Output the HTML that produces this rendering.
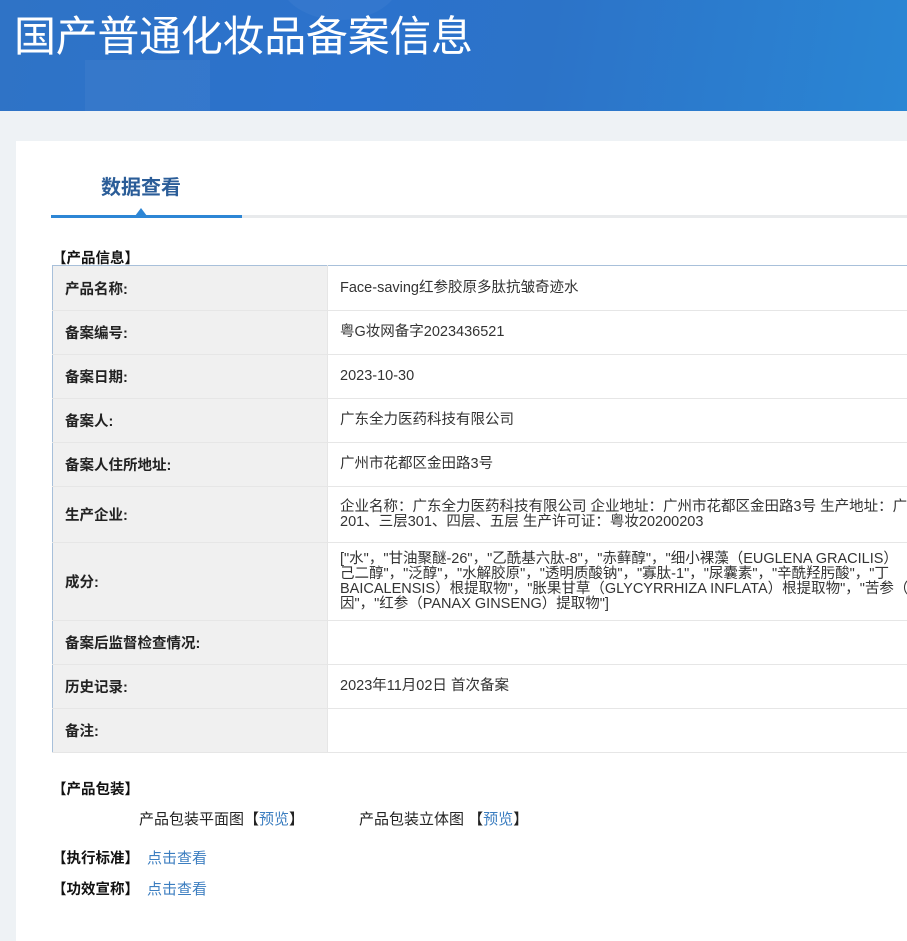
<!DOCTYPE html>
<html><head><meta charset="utf-8"><style>
*{margin:0;padding:0;box-sizing:border-box}
body{width:907px;height:907px;overflow:hidden;background:#eef2f5;font-family:"Liberation Sans","Noto Sans CJK SC",sans-serif;color:#333;position:relative}
.hdr{position:absolute;left:0;top:0;width:907px;height:111px;background:linear-gradient(100deg,#2f73c6 0%,#2b72cc 40%,#2c73c8 60%,#2a86d4 100%);overflow:hidden}
.hdr .s1{position:absolute;left:85px;top:60px;width:125px;height:60px;background:rgba(255,255,255,0.04)}
.hdr .s2{position:absolute;left:280px;top:-60px;width:120px;height:80px;border-radius:50%;background:rgba(255,255,255,0.04)}
.hdr h1{position:absolute;left:14px;top:3px;font-size:42px;font-weight:normal;color:#fff;letter-spacing:-0.3px;font-family:"Liberation Sans","Noto Sans CJK SC",sans-serif}
.panel{position:absolute;left:16px;top:141px;width:900px;height:800px;background:#fff}
.tab{position:absolute;left:101px;top:171px;font-size:20px;font-weight:bold;color:#2b5d98}
.line{position:absolute;left:51px;top:215px;width:860px;height:3px;background:#e8eaec}
.line b{position:absolute;left:0;top:0;width:191px;height:3px;background:#2d86d5}
.tri{position:absolute;left:135px;top:208px;width:0;height:0;border-left:6px solid transparent;border-right:6px solid transparent;border-bottom:8px solid #2d86d5}
.sec{position:absolute;font-size:14.5px;font-weight:bold;color:#111}
table{position:absolute;left:52px;top:265px;width:870px;border-collapse:collapse;border:1px solid #a8c0da;font-size:14.5px}
td{border-bottom:1px solid #e6e6e6;vertical-align:middle}
td.l{width:275px;background:#f0f0f0;font-weight:bold;padding-left:12px;color:#222;border-right:1px solid #e6e6e6}
td.v{padding-left:12px;line-height:15px;white-space:nowrap;overflow:hidden;color:#333}
a{color:#3c7ec0;text-decoration:none}
.t{position:absolute;font-size:15px;color:#222}
</style></head><body>
<div class="hdr"><div class="s1"></div><div class="s2"></div><h1>国产普通化妆品备案信息</h1></div>
<div class="panel"></div>
<div class="tab">数据查看</div>
<div class="line"><b></b></div>
<div class="tri"></div>
<div class="sec" style="left:52px;top:247px">【产品信息】</div>
<table>
<tr style="height:45px"><td class="l">产品名称:</td><td class="v">Face-saving红参胶原多肽抗皱奇迹水</td></tr>
<tr style="height:44px"><td class="l">备案编号:</td><td class="v">粤G妆网备字2023436521</td></tr>
<tr style="height:44px"><td class="l">备案日期:</td><td class="v">2023-10-30</td></tr>
<tr style="height:44px"><td class="l">备案人:</td><td class="v">广东全力医药科技有限公司</td></tr>
<tr style="height:44px"><td class="l">备案人住所地址:</td><td class="v">广州市花都区金田路3号</td></tr>
<tr style="height:56px"><td class="l">生产企业:</td><td class="v">企业名称：广东全力医药科技有限公司 企业地址：广州市花都区金田路3号 生产地址：广<br>201、三层301、四层、五层 生产许可证：粤妆20200203</td></tr>
<tr style="height:78px"><td class="l">成分:</td><td class="v">["水"，"甘油聚醚-26"，"乙酰基六肽-8"，"赤藓醇"，"细小裸藻（EUGLENA GRACILIS）<br>己二醇"，"泛醇"，"水解胶原"，"透明质酸钠"，"寡肽-1"，"尿囊素"，"辛酰羟肟酸"，"丁<br>BAICALENSIS）根提取物"，"胀果甘草（GLYCYRRHIZA INFLATA）根提取物"，"苦参（<br>因"，"红参（PANAX GINSENG）提取物"]</td></tr>
<tr style="height:44px"><td class="l">备案后监督检查情况:</td><td class="v"></td></tr>
<tr style="height:44px"><td class="l">历史记录:</td><td class="v">2023年11月02日 首次备案</td></tr>
<tr style="height:44px"><td class="l">备注:</td><td class="v"></td></tr>
</table>
<div class="sec" style="left:52px;top:778px">【产品包装】</div>
<div class="t" style="left:139px;top:808px">产品包装平面图【<a>预览</a>】</div>
<div class="t" style="left:359px;top:808px">产品包装立体图 【<a>预览</a>】</div>
<div class="sec" style="left:52px;top:847px">【执行标准】<a style="font-weight:normal;margin-left:8px;font-size:15px">点击查看</a></div>
<div class="sec" style="left:52px;top:878px">【功效宣称】<a style="font-weight:normal;margin-left:8px;font-size:15px">点击查看</a></div>
</body></html>
